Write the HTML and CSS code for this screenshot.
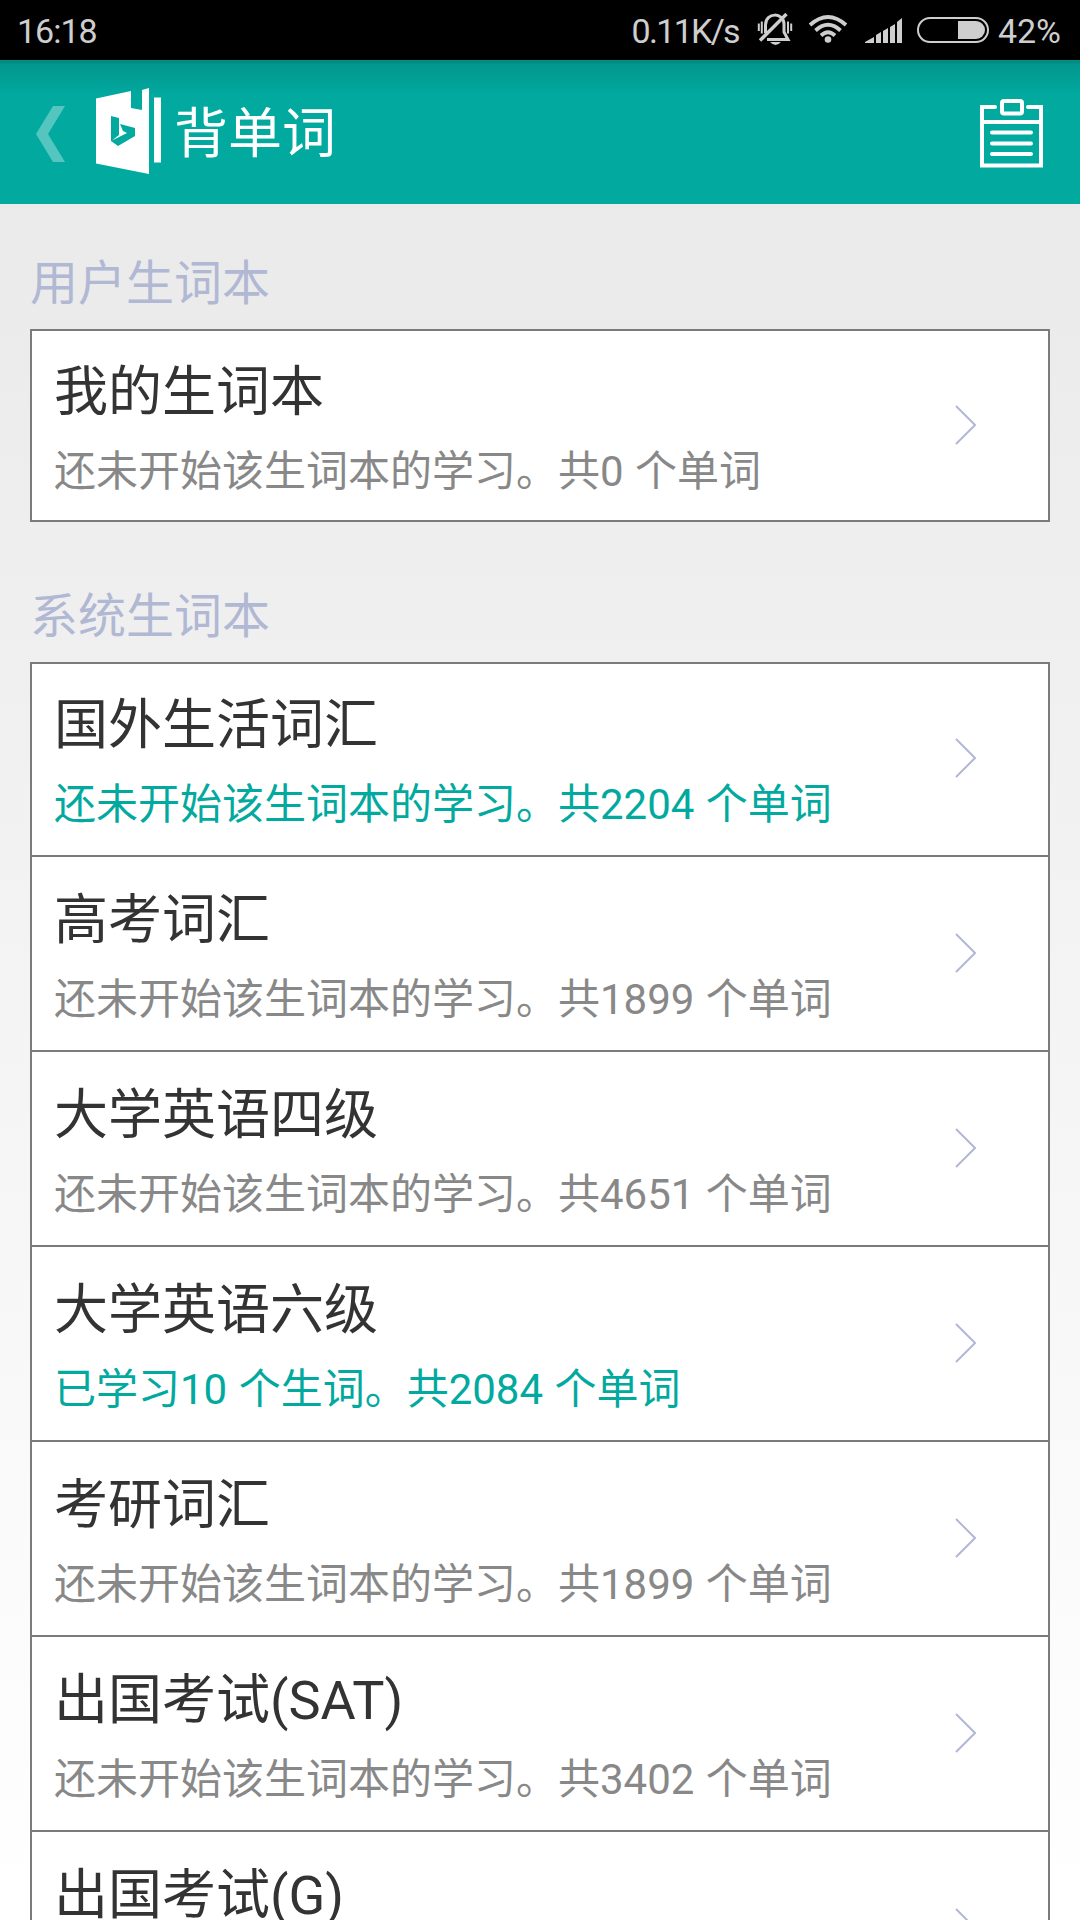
FILE: index.html
```html
<!DOCTYPE html>
<html lang="zh-CN">
<head>
    <meta charset="UTF-8">
    <meta name="viewport" content="width=device-width, initial-scale=1.0">
    <title>背单词</title>
    <link rel="stylesheet" href="styles.css">
</head>
<body>
    <div class="statusbar">
        <span class="time">16:18</span>
        <span class="speed">0.11K/s</span>
        <svg class="mute" width="36" height="33" viewBox="0 0 36 33">
            <g fill="none" stroke="#cecece" stroke-width="3">
                <path d="M8.5 20V12C8.5 -1 27 -1 27 11V19L31 26.500H10"/>
                <path d="M3 27.500L29.500 1" stroke-width="3.400"/>
                <path d="M1.800 10.500V18M4.800 8.500V20.500M31 8.500V20.500M34.200 10.500V18" stroke-width="2"/>
            </g>
            <path d="M13 29H24Q18.500 35 13 29Z" fill="#cecece"/>
        </svg>
        <svg class="wifi" width="40" height="28" viewBox="0 0 40 28">
            <g fill="none" stroke="#cecece" stroke-width="3.800">
                <path d="M2 10Q20 -6 38 10"/>
                <path d="M7.500 15.500Q20 4 32.500 15.500"/>
                <path d="M13 20.500Q20 14 27 20.500"/>
            </g>
            <circle cx="20" cy="24.500" r="3.300" fill="#cecece"/>
        </svg>
        <svg class="signal" width="38" height="26" viewBox="0 0 38 26">
            <path fill="#cecece" d="M0 25V24L9 19V25ZM11 25V17L16 14V25ZM18 25V13L23 10V25ZM25 25V9L30 6V25ZM32 25V4L37 0V25Z"/>
        </svg>
        <div class="battery"><div class="level"></div></div>
        <span class="percent">42%</span>
    </div>

    <header class="header">
        <svg class="back" width="29" height="56" viewBox="0 0 29 56">
            <path fill="#55c6bf" d="M17 0H29L12 28L29 56H17L0 28Z"/>
        </svg>
        <svg class="logo" width="66" height="86" viewBox="0 0 66 86">
            <path fill="#fff" d="M0 10.500L35 3V20L46 22V2L53 0V86L0 75.500Z"/>
            <rect x="58" y="9.500" width="7" height="65" fill="#fff"/>
            <path fill="#02a99f" d="M15 28L23 30V47L16 52.500L31 45L27 43L24 36L39 40V48L22 58L15 53Z"/>
        </svg>
        <h1>背单词</h1>
        <svg class="clipboard" width="64" height="70" viewBox="0 0 64 70">
            <g fill="none" stroke="#fff" stroke-width="4" stroke-linecap="round">
                <path d="M15 9H2V67.500H61V9H48"/>
                <path d="M2 24H61"/>
                <rect x="22" y="3" width="20" height="12.500" rx="2"/>
                <path d="M12 34.500H51M12 45.500H51M12 56H51"/>
            </g>
        </svg>
    </header>

    <main class="content">
        <h2>用户生词本</h2>
        <ul class="list">
            <li class="row">
                <div class="book">
                    <div class="name">我的生词本</div>
                    <div class="info">还未开始该生词本的学习。共0 个单词</div>
                </div>
                <svg class="arrow" viewBox="0 0 21 40"><path d="M1 1L20 20L1 39"/></svg>
            </li>
        </ul>

        <h2>系统生词本</h2>
        <ul class="list">
            <li class="row">
                <div class="book">
                    <div class="name">国外生活词汇</div>
                    <div class="info active">还未开始该生词本的学习。共2204 个单词</div>
                </div>
                <svg class="arrow" viewBox="0 0 21 40"><path d="M1 1L20 20L1 39"/></svg>
            </li>
            <li class="row">
                <div class="book">
                    <div class="name">高考词汇</div>
                    <div class="info">还未开始该生词本的学习。共1899 个单词</div>
                </div>
                <svg class="arrow" viewBox="0 0 21 40"><path d="M1 1L20 20L1 39"/></svg>
            </li>
            <li class="row">
                <div class="book">
                    <div class="name">大学英语四级</div>
                    <div class="info">还未开始该生词本的学习。共4651 个单词</div>
                </div>
                <svg class="arrow" viewBox="0 0 21 40"><path d="M1 1L20 20L1 39"/></svg>
            </li>
            <li class="row">
                <div class="book">
                    <div class="name">大学英语六级</div>
                    <div class="info active">已学习10 个生词。共2084 个单词</div>
                </div>
                <svg class="arrow" viewBox="0 0 21 40"><path d="M1 1L20 20L1 39"/></svg>
            </li>
            <li class="row">
                <div class="book">
                    <div class="name">考研词汇</div>
                    <div class="info">还未开始该生词本的学习。共1899 个单词</div>
                </div>
                <svg class="arrow" viewBox="0 0 21 40"><path d="M1 1L20 20L1 39"/></svg>
            </li>
            <li class="row">
                <div class="book">
                    <div class="name">出国考试(SAT)</div>
                    <div class="info">还未开始该生词本的学习。共3402 个单词</div>
                </div>
                <svg class="arrow" viewBox="0 0 21 40"><path d="M1 1L20 20L1 39"/></svg>
            </li>
            <li class="row">
                <div class="book">
                    <div class="name">出国考试(G)</div>
                </div>
                <svg class="arrow" viewBox="0 0 21 40"><path d="M1 1L20 20L1 39"/></svg>
            </li>
        </ul>
    </main>
</body>
</html>
```
FILE: styles.css
```css
* {
    box-sizing: border-box;
}
body {
    margin: 0;
    width: 1080px;
    height: 1920px;
    overflow: hidden;
    display: flex;
    flex-direction: column;
    font-family: Roboto, "Noto Sans CJK SC", sans-serif;
    background: #fff;
}
h1, h2, ul {
    margin: 0;
    padding: 0;
    font-weight: normal;
}
svg {
    display: block;
    flex: none;
}

/* status bar */
.statusbar {
    height: 60px;
    flex: none;
    display: flex;
    align-items: flex-start;
    padding: 0 19px 0 17px;
    background: #000;
    color: #cecece;
    font-size: 34px;
    line-height: 62px;
}
.time {
    margin-right: auto;
    letter-spacing: -1px;
}
.speed {
    letter-spacing: -1.7px;
}
.mute {
    margin: 13px 0 0 18px;
}
.wifi {
    margin: 15px 0 0 15px;
}
.signal {
    margin: 18px 0 0 17px;
}
.battery {
    width: 72px;
    height: 26px;
    margin: 17px 9px 0 14px;
    padding: 2px;
    border: 2px solid #cecece;
    border-radius: 13px;
    display: flex;
    justify-content: flex-end;
}
.level {
    width: 27px;
    height: 18px;
    background: #cecece;
    border-radius: 0 9px 9px 0;
}

/* title bar */
.header {
    height: 144px;
    flex: none;
    display: flex;
    align-items: flex-start;
    padding: 0 36px 0 36px;
    background: linear-gradient(#018d84 0, #018d84 3px, #02978e 4px, #02a99f 36px);
    color: #fff;
}
.back {
    margin-top: 46px;
}
.logo {
    margin: 28px 0 0 31px;
}
h1 {
    flex: 1;
    margin-left: 12px;
    font-size: 54px;
    line-height: 150px;
}
.clipboard {
    margin-top: 38px;
}

/* word books */
.content {
    flex: 1;
    min-height: 0;
    padding: 0 30px;
    background: linear-gradient(#eaeaea, #fff);
}
h2 {
    height: 125px;
    padding-top: 45px;
    font-size: 48px;
    line-height: 70px;
    color: #b1b8d3;
}
.list {
    list-style: none;
    border: 2px solid #7b7b7b;
    background: #fff;
}
.list + h2 {
    height: 140px;
    padding-top: 60px;
}
.row {
    height: 195px;
    display: flex;
    justify-content: space-between;
    padding: 24px 72px 0 22px;
    border-bottom: 2px solid #7b7b7b;
}
.row:first-child {
    height: 193px;
    padding-top: 22px;
}
.row:only-child {
    height: 189px;
    border-bottom: none;
}
.name {
    padding-top: 2px;
    font-size: 54px;
    line-height: 76px;
    color: #333;
}
.info {
    margin-top: 6px;
    font-size: 42px;
    line-height: 70px;
    word-spacing: 1px;
    color: #888;
}
.info.active {
    color: #02a99f;
}
.arrow {
    width: 21px;
    height: 40px;
    margin-top: 52px;
    fill: none;
    stroke: #b1b8d3;
    stroke-width: 2;
}
```
